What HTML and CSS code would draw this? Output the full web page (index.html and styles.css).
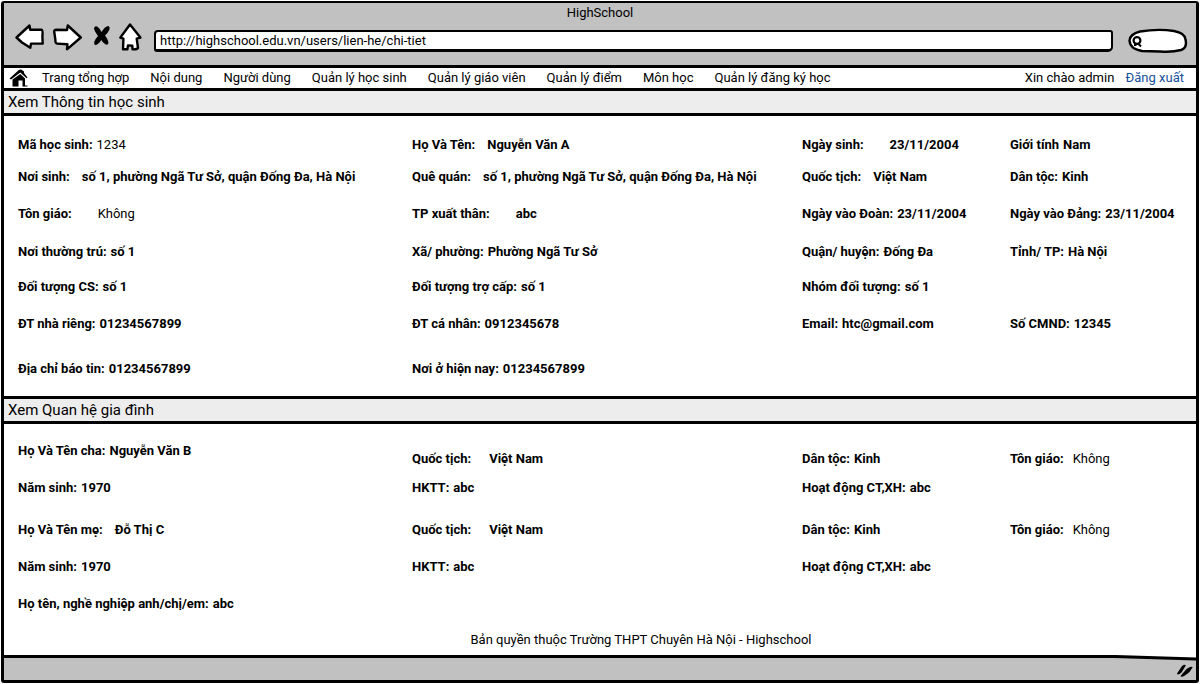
FILE: index.html
```html
<!DOCTYPE html>
<html lang="vi">
<head>
<meta charset="utf-8">
<title>HighSchool</title>
<link rel="stylesheet" href="styles.css">
</head>
<body>
<div class="window">
  <header class="chrome">
    <div class="chrome-title">HighSchool</div>
    <div class="toolbar">
      <div class="tools">
        <button class="tool" type="button" aria-label="Back"><svg width="30" height="28" viewBox="15 23 30 28"><path class="sketch" d="M16.500 37.500 L29.500 25.500 L30.200 29.800 L41.500 29.600 Q43 30 42.400 36 L42.700 43.600 L31 43.600 L30.300 47.800 L22 42.500 Z"/></svg></button>
        <button class="tool" type="button" aria-label="Forward"><svg width="30" height="28" viewBox="53 23 30 28"><path class="sketch" d="M54.200 31.500 Q54 30 56 29.700 L67 30 L67.800 25.500 L80.800 37.500 L67 49.300 L67.400 44.200 L57 43.600 Q55.300 43.500 55.400 40 Z"/></svg></button>
        <button class="tool" type="button" aria-label="Stop"><svg width="20" height="28" viewBox="91 23 20 28"><path class="blob" d="M94 28.500 Q94.200 26.600 95.800 26.300 Q98.500 26.300 101.500 32 Q105 26 108.500 26 Q110.200 26.500 109.500 29.500 Q107.500 33.500 105 35.500 Q109 41 108.300 43.500 Q107 45.500 105.300 44.300 Q102.500 42.500 101.300 40 Q98.500 44.500 95.500 45.200 Q93.500 44.500 94.200 42 Q95.500 38.500 98 36 Q94.500 31 94 28.500 Z"/></svg></button>
        <button class="tool" type="button" aria-label="Home"><svg width="24" height="28" viewBox="119 23 24 28"><path class="sketch" d="M130 24.500 L140.400 37.600 L136.700 38.600 L138 48 Q137 49.500 132.600 49.300 L132.300 45.600 L128 45.400 L127.400 49.200 L123 49.300 L123.400 38.600 L120.300 37.600 Z"/></svg></button>
      </div>
      <input class="address" type="text" aria-label="Address" value="http://highschool.edu.vn/users/lien-he/chi-tiet">
      <div class="search">
        <svg width="60" height="26" viewBox="0 0 60 26"><path class="sketch" d="M1.500 12.500 Q2 6 12 3.500 Q30 .5 46 3 Q57 5 57.500 11.500 Q59.500 20 53 22 Q44 24.500 32 23.500 L14 23 Q2 21 1.500 12.500 Z"/><circle class="lens" cx="9" cy="12.500" r="3.400"/><path class="handle" d="M6 17 H8.500 M10 15.500 L13 18.500"/></svg>
        <input class="search-field" type="search" aria-label="Search">
      </div>
    </div>
  </header>

  <nav class="menu">
    <a class="home" href="#" aria-label="Trang chủ"><svg width="20" height="18" viewBox="0 0 20 18"><path d="M.5 9.500 L9.500 1.300 Q11.300 0 12.500 .8 L15 2.500 V4 L18.500 8.500 L17.500 9.300 L11.300 3.500 L2 10.500 Z"/><path d="M3.500 10.500 L11.300 5 L16 9.500 V16.500 H18.500 V17.500 H13.500 V11.500 H9.500 V17.500 H3.500 Z"/></svg></a>
    <a href="#">Trang tổng hợp</a>
    <a href="#">Nội dung</a>
    <a href="#">Người dùng</a>
    <a href="#">Quản lý học sinh</a>
    <a href="#">Quản lý giáo viên</a>
    <a href="#">Quản lý điểm</a>
    <a href="#">Môn học</a>
    <a href="#">Quản lý đăng ký học</a>
    <span class="account">Xin chào admin <a class="logout" href="#">Đăng xuất</a></span>
  </nav>

  <main>
    <h2 class="bar">Xem Thông tin học sinh</h2>
    <dl class="grid student">
      <div class="c1"><dt>Mã học sinh:</dt><dd class="plain">1234</dd></div>
      <div class="c2 wide"><dt>Họ Và Tên:</dt><dd>Nguyễn Văn A</dd></div>
      <div class="c3 widest"><dt>Ngày sinh:</dt><dd>23/11/2004</dd></div>
      <div class="c4"><dt>Giới tính</dt><dd>Nam</dd></div>

      <div class="c1 wide"><dt>Nơi sinh:</dt><dd>số 1, phường Ngã Tư Sở, quận Đống Đa, Hà Nội</dd></div>
      <div class="c2 wide"><dt>Quê quán:</dt><dd>số 1, phường Ngã Tư Sở, quận Đống Đa, Hà Nội</dd></div>
      <div class="c3 wide"><dt>Quốc tịch:</dt><dd>Việt Nam</dd></div>
      <div class="c4"><dt>Dân tộc:</dt><dd>Kinh</dd></div>

      <div class="c1 widest"><dt>Tôn giáo:</dt><dd class="plain">Không</dd></div>
      <div class="c2 widest"><dt>TP xuất thân:</dt><dd>abc</dd></div>
      <div class="c3"><dt>Ngày vào Đoàn:</dt><dd>23/11/2004</dd></div>
      <div class="c4"><dt>Ngày vào Đảng:</dt><dd>23/11/2004</dd></div>

      <div class="c1"><dt>Nơi thường trú:</dt><dd>số 1</dd></div>
      <div class="c2"><dt>Xã/ phường:</dt><dd>Phường Ngã Tư Sở</dd></div>
      <div class="c3"><dt>Quận/ huyện:</dt><dd>Đống Đa</dd></div>
      <div class="c4"><dt>Tỉnh/ TP:</dt><dd>Hà Nội</dd></div>

      <div class="c1"><dt>Đối tượng CS:</dt><dd>số 1</dd></div>
      <div class="c2"><dt>Đối tượng trợ cấp:</dt><dd>số 1</dd></div>
      <div class="c3"><dt>Nhóm đối tượng:</dt><dd>số 1</dd></div>

      <div class="c1"><dt>ĐT nhà riêng:</dt><dd>01234567899</dd></div>
      <div class="c2"><dt>ĐT cá nhân:</dt><dd>0912345678</dd></div>
      <div class="c3"><dt>Email:</dt><dd>htc@gmail.com</dd></div>
      <div class="c4"><dt>Số CMND:</dt><dd>12345</dd></div>

      <div class="c1"><dt>Địa chỉ báo tin:</dt><dd>01234567899</dd></div>
      <div class="c2"><dt>Nơi ở hiện nay:</dt><dd>01234567899</dd></div>
    </dl>

    <h2 class="bar ruled">Xem Quan hệ gia đình</h2>
    <dl class="grid family">
      <div class="c1 lead"><dt>Họ Và Tên cha:</dt><dd>Nguyễn Văn B</dd></div>
      <div class="c2 wider"><dt>Quốc tịch:</dt><dd>Việt Nam</dd></div>
      <div class="c3"><dt>Dân tộc:</dt><dd>Kinh</dd></div>
      <div class="c4 medium"><dt>Tôn giáo:</dt><dd class="plain">Không</dd></div>

      <div class="c1"><dt>Năm sinh:</dt><dd>1970</dd></div>
      <div class="c2"><dt>HKTT:</dt><dd>abc</dd></div>
      <div class="c3"><dt>Hoạt động CT,XH:</dt><dd>abc</dd></div>

      <div class="c1 wide"><dt>Họ Và Tên mẹ:</dt><dd>Đỗ Thị C</dd></div>
      <div class="c2 wider"><dt>Quốc tịch:</dt><dd>Việt Nam</dd></div>
      <div class="c3"><dt>Dân tộc:</dt><dd>Kinh</dd></div>
      <div class="c4 medium"><dt>Tôn giáo:</dt><dd class="plain">Không</dd></div>

      <div class="c1"><dt>Năm sinh:</dt><dd>1970</dd></div>
      <div class="c2"><dt>HKTT:</dt><dd>abc</dd></div>
      <div class="c3"><dt>Hoạt động CT,XH:</dt><dd>abc</dd></div>

      <div class="c1"><dt>Họ tên, nghề nghiệp anh/chị/em:</dt><dd>abc</dd></div>
    </dl>
  </main>

  <footer class="copyright">Bản quyền thuộc Trường THPT Chuyên Hà Nội - Highschool</footer>
  <div class="status">
    <svg class="status-edge" viewBox="0 0 1192 7" preserveAspectRatio="none"><path class="paper" d="M0 0 H1192 V5 L1110 2 H0 Z"/><path d="M0 0 L1112 0 L1192 2.500 V5.500 L1110 3 H0 Z"/></svg>
    <svg class="grip" width="18" height="14" viewBox="0 0 18 14"><path d="M1 9.500 L6 2 Q9 0 9.800 1.500 L5.500 8.500 Q1.500 12 1 9.500 Z"/><path d="M4.500 12 L10.500 5 Q15.500 1.500 16.700 3.200 L13.500 8 Q6 14.500 4.500 12 Z"/></svg>
  </div>
</div>
</body>
</html>
```
FILE: styles.css
```css
* { box-sizing: border-box; }

body {
  margin: 1px;
  background: #fff;
  color: #000;
  font: 13px/20px Roboto, "Noto Sans", sans-serif;
}

.window {
  border: 3px solid #000;
  border-top-width: 2px;
  border-radius: 3px;
}

.chrome { background: #c1c1c1; }
.chrome-title { text-align: center; }

.toolbar {
  display: flex;
  align-items: flex-start;
  padding: 0 8px 11px 11px;
}
.tools { display: flex; gap: 8px; margin-right: 11px; }
.tool {
  display: block;
  padding: 0;
  border: 0;
  background: none;
}
.tool svg, .search svg, .home svg { display: block; }

.sketch {
  fill: #fff;
  stroke: #000;
  stroke-width: 2.4;
  stroke-linejoin: round;
  stroke-linecap: round;
}
.lens { fill: #fff; stroke: #000; stroke-width: 2.2; }
.handle { fill: none; stroke: #000; stroke-width: 2; }

.address {
  flex: 1;
  min-width: 0;
  height: 22px;
  margin-top: 7px;
  padding: 0 4px;
  border: 2px solid #000;
  border-bottom-width: 3px;
  border-radius: 4px 3px 5px 3px;
  background: #fff;
  color: #000;
  font: inherit;
}

.search { position: relative; margin: 5px 0 0 15px; }
.search-field {
  position: absolute;
  inset: 4px 6px 4px 16px;
  width: 36px;
  padding: 0;
  border: 0;
  background: none;
  font: inherit;
}

.menu {
  display: flex;
  align-items: center;
  gap: 21px;
  height: 26px;
  padding: 0 12px 0 5px;
  border-top: 3px solid #000;
  border-bottom: 3px solid #000;
  white-space: nowrap;
}
.menu a { color: #000; text-decoration: none; }
.menu .home { margin-right: -8px; }
.account { margin-left: auto; }
.menu .logout { margin-left: 8px; color: #17509b; }

.bar {
  margin: 0;
  padding: 0 4px;
  border-bottom: 3px solid #000;
  background: #ededed;
  font-size: 15px;
  font-weight: 400;
  line-height: 22px;
}
.ruled { border-top: 3px solid #000; }

.grid {
  display: grid;
  grid-template-columns: 394fr 390fr 208fr 186fr;
  align-items: end;
  margin: 0;
  padding-left: 14px;
  font-weight: 700;
}
.student {
  grid-template-rows: 20px 32px 37px 38px 35px 37px 45px;
  padding-top: 19px;
  padding-bottom: 17px;
}
.family {
  grid-template-rows: 28px 29px 42px 37px 37px;
  padding-top: 17px;
  padding-bottom: 16px;
}
.grid > div { display: flex; gap: 4px; white-space: nowrap; }
.grid dd { margin: 0; }
.grid .plain { font-weight: 400; }
.grid .medium { gap: 9px; }
.grid .wide { gap: 12px; }
.grid .wider { gap: 18px; }
.grid .widest { gap: 26px; }
.grid .lead { align-self: start; }
.c1 { grid-column: 1; }
.c2 { grid-column: 2; }
.c3 { grid-column: 3; }
.c4 { grid-column: 4; }

.copyright { padding: 0 0 5px 82px; text-align: center; }

.status {
  position: relative;
  display: flex;
  justify-content: flex-end;
  align-items: flex-end;
  height: 25px;
  padding: 0 2px 2px;
  background: #c1c1c1;
}
.status-edge {
  position: absolute;
  top: 0;
  left: 0;
  width: 100%;
  height: 7px;
}
.paper { fill: #fff; }
```
